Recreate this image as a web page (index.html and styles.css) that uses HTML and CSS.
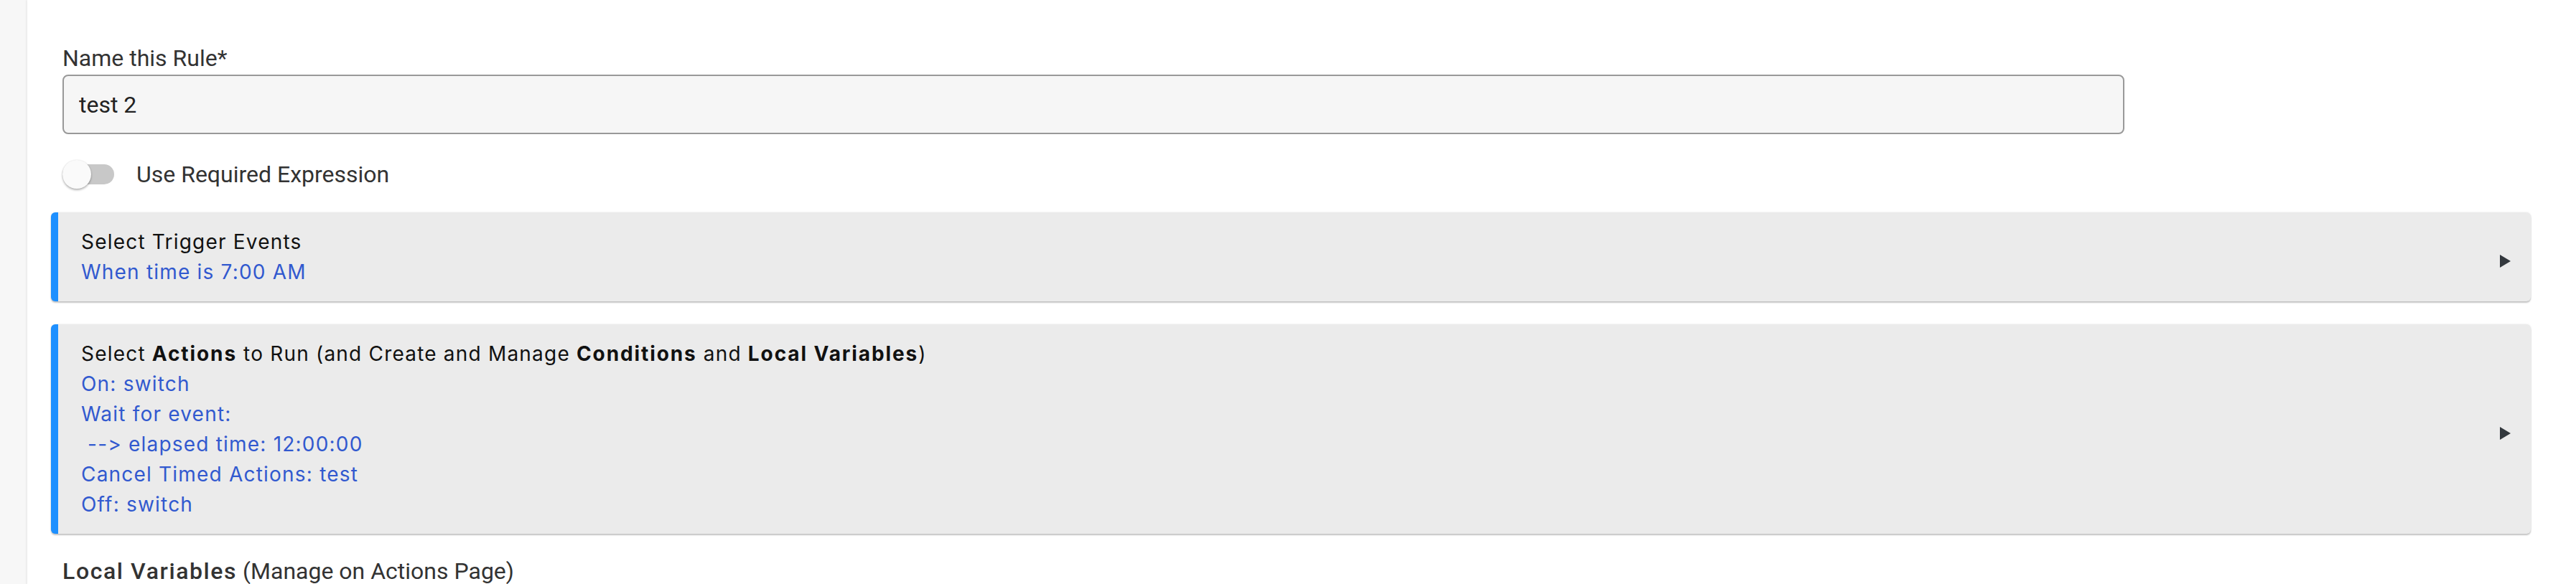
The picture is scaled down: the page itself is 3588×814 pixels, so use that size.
FILE: index.html
```html
<!DOCTYPE html>
<html lang="en">
<head>
<meta charset="utf-8">
<title>Rule</title>
<link rel="stylesheet" href="styles.css">
</head>
<body>
<div class="page">
  <div class="sidebar"></div>
  <main class="main">
    <div class="field">
      <label class="field-label" for="rule-name">Name this Rule*</label>
      <input id="rule-name" class="text-input" type="text" value="test 2">
    </div>
    <div class="toggle-row">
      <span class="switch"><span class="switch-track"></span><span class="switch-knob"></span></span>
      <span class="toggle-label">Use Required Expression</span>
    </div>
    <div class="card card-first">
      <div class="card-text">
        <div class="card-title">Select Trigger Events</div>
        <div class="card-line">When time is 7:00 AM</div>
      </div>
      <svg class="card-arrow" width="15" height="18" viewBox="0 0 15 18"><polygon points="0,0 15,9 0,18" fill="#33383d"/></svg>
    </div>
    <div class="card">
      <div class="card-text">
        <div class="card-title">Select <b>Actions</b> to Run (and Create and Manage <b>Conditions</b> and <b>Local Variables</b>)</div>
        <div class="card-line">On: switch</div>
        <div class="card-line">Wait for event:</div>
        <div class="card-line"> --&gt; elapsed time: 12:00:00</div>
        <div class="card-line">Cancel Timed Actions: test</div>
        <div class="card-line">Off: switch</div>
      </div>
      <svg class="card-arrow" width="15" height="18" viewBox="0 0 15 18"><polygon points="0,0 15,9 0,18" fill="#33383d"/></svg>
    </div>
    <div class="section-title"><span class="section-strong">Local Variables</span> (Manage on Actions Page)</div>
  </main>
</div>
</body>
</html>
```

FILE: styles.css
```css
html, body {
  margin: 0;
  padding: 0;
}
body {
  background: #f7f7f7;
  font-family: Roboto, "Liberation Sans", sans-serif;
  color: #333;
  height: 814px;
  overflow: hidden;
}
.page {
  display: flex;
  min-height: 814px;
}
.sidebar {
  width: 38px;
  flex: none;
  background: #f7f7f7;
}
.main {
  flex: 1;
  background: #fff;
  box-shadow: -1px 0 3px rgba(0, 0, 0, 0.08);
  padding: 62px 63px 0 33px;
  display: flex;
  flex-direction: column;
}
.field {
  margin-left: 16px;
  display: flex;
  flex-direction: column;
}
.field-label {
  font-size: 32px;
  line-height: 38px;
  color: #333;
  margin-bottom: 4px;
}
.text-input {
  box-sizing: border-box;
  width: 2872px;
  height: 83px;
  border: 2px solid #999;
  border-radius: 8px;
  background: #f6f6f6;
  padding: 0 21px;
  font-family: Roboto, "Liberation Sans", sans-serif;
  font-size: 32px;
  color: #222;
  outline: none;
}
.toggle-row {
  margin: 36px 0 0 16px;
  height: 40px;
  display: flex;
  align-items: center;
}
.switch {
  position: relative;
  width: 72px;
  height: 40px;
  display: flex;
  align-items: center;
  flex: none;
}
.switch-track {
  width: 72px;
  height: 28px;
  border-radius: 14px;
  background: #c8c8c8;
}
.switch-knob {
  position: absolute;
  left: 0;
  top: 0;
  width: 40px;
  height: 40px;
  border-radius: 50%;
  background: #fafafa;
  box-shadow: 0 2px 3px rgba(0, 0, 0, 0.28), 0 0 2px rgba(0, 0, 0, 0.12);
}
.toggle-label {
  margin-left: 31px;
  font-size: 32px;
  color: #333;
}
.card {
  margin-top: 32px;
  display: flex;
  align-items: center;
  background: #ebebeb;
  border-left: 10px solid #1e90ff;
  border-radius: 6px;
  padding: 20px 28px 20px 32px;
  box-shadow: 0 2px 2px rgba(0, 0, 0, 0.22), 0 0 3px rgba(0, 0, 0, 0.08);
  font-family: Inter, "Liberation Sans", sans-serif;
  font-size: 28px;
  line-height: 42px;
  letter-spacing: 1.2px;
  font-variant-ligatures: none;
  font-feature-settings: "calt" 0, "liga" 0;
}
.card-first {
  margin-top: 33px;
}
.card-text {
  flex: 1;
}
.card-title {
  color: #111;
}
.card-title b {
  font-weight: 700;
  letter-spacing: 1.9px;
}
.card-line {
  color: #3159cf;
  white-space: pre;
}
.card-arrow {
  flex: none;
  margin-top: 12px;
}
.section-title {
  margin: 33px 0 0 16px;
  font-size: 32px;
  line-height: 38px;
  color: #333;
}
.section-strong {
  font-weight: 500;
  letter-spacing: 1.6px;
}
```
